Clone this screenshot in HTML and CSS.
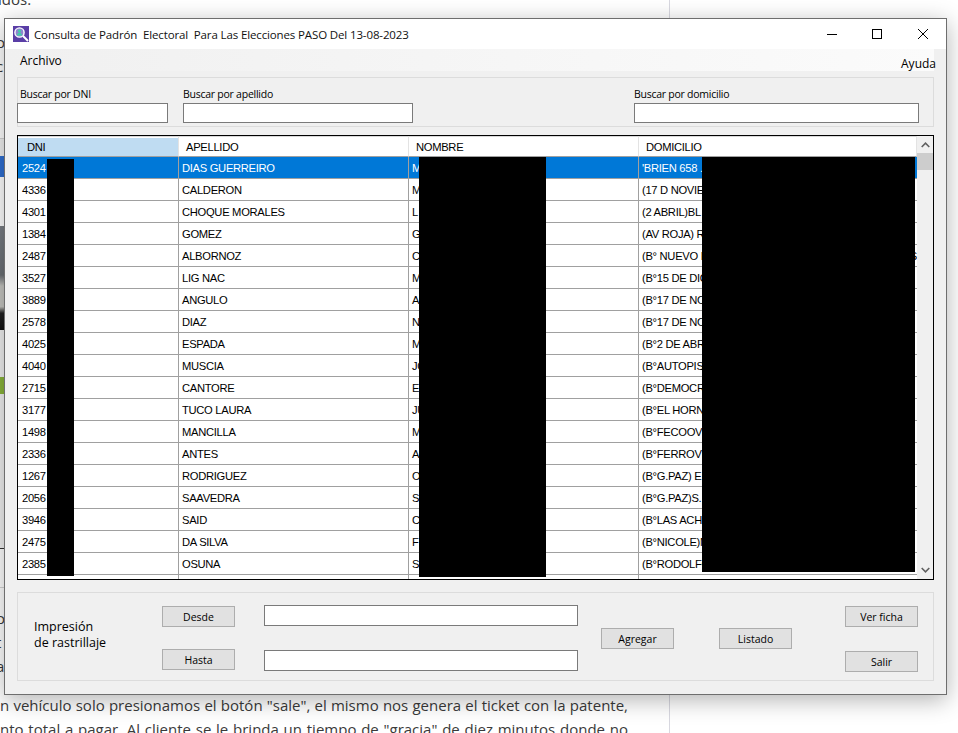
FILE: index.html
```html
<!DOCTYPE html>
<html lang="es">
<head>
<meta charset="UTF-8">
<meta name="viewport" content="width=device-width, initial-scale=1.0">
<title>Consulta de Padrón Electoral</title>
<link rel="stylesheet" href="styles.css">
</head>
<body>

<!-- page behind the window -->
<div class="page">
  <div class="article">
    <p class="art-top">idos.</p>
    <div class="strip">
      <div class="seg seg-white seg-a"><span class="peek peek-1">o</span><span class="peek peek-2">c</span></div>
      <div class="seg seg-pale seg-b"></div>
      <div class="seg seg-blue seg-c"></div>
      <div class="seg seg-white seg-d"></div>
      <div class="seg seg-photo seg-e"></div>
      <div class="seg seg-pale seg-f"></div>
      <div class="seg seg-green seg-g"></div>
      <div class="seg seg-pale seg-h"></div>
      <div class="seg seg-white seg-i"></div>
      <div class="seg seg-white seg-j"><span class="peek peek-3">o</span><span class="peek peek-4">t</span><span class="peek peek-5">a</span></div>
    </div>
    <div class="art-bottom">
      <p class="art-line">n vehículo solo presionamos el botón "sale", el mismo nos genera el ticket con la patente,</p>
      <p class="art-line">nto total a pagar. Al cliente se le brinda un tiempo de "gracia" de diez minutos donde no</p>
    </div>
  </div>
</div>

<div class="window">
  <div class="titlebar">
    <svg class="app-icon" width="16" height="16" viewBox="0 0 16 16">
      <rect width="16" height="16" fill="#5a3ea6"/>
      <circle cx="6.5" cy="6.5" r="4.6" fill="#8f86cf" stroke="#fff" stroke-width="1.4"/>
      <circle cx="6.5" cy="5" r="1.5" fill="#3fd0a8"/>
      <path d="M3.8 9.6c.4-2 1.6-2.6 2.7-2.6s2.3.6 2.7 2.6z" fill="#3fd0a8"/>
      <path d="M10 10l5 5" stroke="#fff" stroke-width="2"/>
    </svg>
    <span class="title-text">Consulta de Padrón  Electoral  Para Las Elecciones PASO Del 13-08-2023</span>
    <div class="win-controls">
      <svg width="10" height="10" viewBox="0 0 10 10"><path d="M0 5.5h10" stroke="#000" fill="none"/></svg>
      <svg width="10" height="10" viewBox="0 0 10 10"><rect x=".5" y=".5" width="9" height="9" stroke="#000" fill="none"/></svg>
      <svg class="win-close" width="10" height="10" viewBox="0 0 10 10"><path d="M0 0l10 10M10 0L0 10" stroke="#000" fill="none"/></svg>
    </div>
  </div>

  <div class="menubar">
    <span class="menu-item">Archivo</span>
    <span class="menu-item menu-help">Ayuda</span>
  </div>

  <div class="content">
    <div class="panel search-panel">
      <div class="field field-dni">
        <label class="field-label">Buscar por DNI</label>
        <input class="text-input" type="text">
      </div>
      <div class="field field-apellido">
        <label class="field-label">Buscar por apellido</label>
        <input class="text-input" type="text">
      </div>
      <div class="field field-domicilio">
        <label class="field-label">Buscar por domicilio</label>
        <input class="text-input" type="text">
      </div>
    </div>

    <div class="grid-box">
      <div class="grid-scroll">
        <table class="grid">
          <colgroup><col class="col-dni"><col class="col-wide"><col class="col-wide"><col class="col-dom"></colgroup>
          <thead>
            <tr><th class="th-active">DNI</th><th>APELLIDO</th><th>NOMBRE</th><th>DOMICILIO</th></tr>
          </thead>
          <tbody>
            <tr class="selected"><td>2524</td><td>DIAS GUERREIRO</td><td>M</td><td>'BRIEN 658 .</td></tr>
            <tr><td>4336</td><td>CALDERON</td><td>M</td><td>(17 D NOVIE</td></tr>
            <tr><td>4301</td><td>CHOQUE MORALES</td><td>L</td><td>(2 ABRIL)BL</td></tr>
            <tr><td>1384</td><td>GOMEZ</td><td>G</td><td>(AV ROJA) R</td></tr>
            <tr><td>2487</td><td>ALBORNOZ</td><td>C</td><td>(B° NUEVO P<span class="cell-tail">S</span></td></tr>
            <tr><td>3527</td><td>LIG NAC</td><td>M</td><td>(B°15 DE DIC</td></tr>
            <tr><td>3889</td><td>ANGULO</td><td>A</td><td>(B°17 DE NO</td></tr>
            <tr><td>2578</td><td>DIAZ</td><td>N</td><td>(B°17 DE NO</td></tr>
            <tr><td>4025</td><td>ESPADA</td><td>M</td><td>(B°2 DE ABR</td></tr>
            <tr><td>4040</td><td>MUSCIA</td><td>JC</td><td>(B°AUTOPIS</td></tr>
            <tr><td>2715</td><td>CANTORE</td><td>E</td><td>(B°DEMOCR</td></tr>
            <tr><td>3177</td><td>TUCO LAURA</td><td>JU</td><td>(B°EL HORN</td></tr>
            <tr><td>1498</td><td>MANCILLA</td><td>M</td><td>(B°FECOOVI</td></tr>
            <tr><td>2336</td><td>ANTES</td><td>A</td><td>(B°FERROVI</td></tr>
            <tr><td>1267</td><td>RODRIGUEZ</td><td>O</td><td>(B°G.PAZ) E</td></tr>
            <tr><td>2056</td><td>SAAVEDRA</td><td>S</td><td>(B°G.PAZ)S.</td></tr>
            <tr><td>3946</td><td>SAID</td><td>C</td><td>(B°LAS ACH</td></tr>
            <tr><td>2475</td><td>DA SILVA</td><td>F</td><td>(B°NICOLE)M</td></tr>
            <tr><td>2385</td><td>OSUNA</td><td>S</td><td>(B°RODOLFO</td></tr>
            <tr><td></td><td></td><td></td><td></td></tr>
          </tbody>
        </table>
      </div>
      <div class="scrollbar">
        <svg class="scroll-arrow" width="9" height="6" viewBox="0 0 9 6"><path d="M.7 5L4.5 1.2 8.3 5" stroke="#606060" stroke-width="1.6" fill="none"/></svg>
        <div class="scroll-thumb"></div>
        <svg class="scroll-arrow scroll-down" width="9" height="6" viewBox="0 0 9 6"><path d="M.7 1L4.5 4.8 8.3 1" stroke="#606060" stroke-width="1.6" fill="none"/></svg>
      </div>
      <!-- redaction bars from the original screenshot -->
      <div class="redact redact-dni"></div>
      <div class="redact redact-nombre"></div>
      <div class="redact redact-dom"></div>
    </div>

    <div class="panel print-panel">
      <div class="print-label">Impresión<br>de rastrillaje</div>
      <div class="btn-col">
        <button class="btn">Desde</button>
        <button class="btn">Hasta</button>
      </div>
      <div class="input-col">
        <input class="text-input" type="text">
        <input class="text-input" type="text">
      </div>
      <button class="btn btn-agregar">Agregar</button>
      <button class="btn btn-listado">Listado</button>
      <div class="side-col">
        <button class="btn">Ver ficha</button>
        <button class="btn">Salir</button>
      </div>
    </div>
  </div>
</div>

</body>
</html>
```

FILE: styles.css
```css
* {
  box-sizing: border-box;
}
html, body {
  margin: 0;
  height: 733px;
  overflow: hidden;
  background-color: #fff;
}

/* page behind the window */
.page {
  height: 733px;
  font-family: "Open Sans", sans-serif;
  font-size: 15px;
  color: #3a3a3a;
}
.article {
  width: 670px;
  height: 733px;
  border-right: 1px solid #d8d8e0;
  overflow: hidden;
}
.art-top {
  margin: -13px 0 0 -2px;
  height: 31px;
  line-height: 24px;
}
.art-bottom {
  width: 628px;
  margin-top: 6px;
  line-height: 24px;
}
.art-line {
  margin: 0;
  text-align: justify;
  text-align-last: justify;
}
.strip {
  width: 4px;
  overflow: hidden;
  line-height: 24px;
}
.seg-white { background-color: #fff; }
.seg-pale { background-color: #f1f1f1; }
.seg-blue { background-color: #2f6fd2; }
.seg-green { background-color: #8ab53a; }
.seg-photo { background: linear-gradient(#7a7f85, #6a6f74 45%, #c5c5c0 55%, #c5c5c0 74%, #222 80%, #111 95%, #f1f1f1 95%); }
.seg-a { height: 120px; padding-top: 12px; }
.seg-b { height: 18px; border-top: 1px solid #d5d5d5; }
.seg-c { height: 21px; }
.seg-d { height: 49px; }
.seg-e { height: 109px; }
.seg-f { height: 42px; }
.seg-g { height: 17px; }
.seg-h { height: 155px; border-bottom: 1px solid #333; }
.seg-i { height: 39px; border-bottom: 1px solid #d5d5d5; }
.seg-j { height: 99px; padding-top: 18px; }
.peek {
  display: block;
  margin-left: -4px;
}

/* window */
.window {
  position: absolute;
  left: 4px;
  top: 18px;
  width: 943px;
  height: 677px;
  display: flex;
  flex-direction: column;
  background-color: #f0f0f0;
  border: 1px solid #6e6e6e;
  box-shadow: 0 5px 22px rgba(0, 0, 0, 0.3);
  font-family: "Open Sans", sans-serif;
  color: #000;
}
.titlebar {
  display: flex;
  align-items: center;
  height: 30px;
  padding-left: 8px;
  background-color: #fff;
}
.app-icon {
  flex: none;
  margin-right: 5px;
}
.title-text {
  font-size: 11.5px;
  letter-spacing: -0.13px;
  white-space: pre;
  color: #111;
}
.win-controls {
  display: flex;
  gap: 35px;
  margin-left: auto;
  margin-right: 18px;
}
.win-close {
  margin-left: 1px;
}
.menubar {
  display: flex;
  justify-content: space-between;
  width: 929px;
  height: 22px;
  padding-left: 15px;
  background: linear-gradient(90deg, #f0f0f0, #fbfbfb);
  font-size: 12px;
}
.menu-item {
  line-height: 23px;
}
.menu-help {
  margin-right: -2px;
  line-height: 30px;
}
.content {
  padding: 6px 12px 0;
}
.panel {
  display: flex;
  width: 917px;
  border: 1px solid #dcdcdc;
}
.search-panel {
  height: 50px;
}
.field {
  display: flex;
  flex-direction: column;
  margin-left: -1px;
  padding-top: 8px;
}
.field-label {
  height: 17px;
  padding-left: 3px;
  font-size: 10.5px;
  letter-spacing: -0.25px;
  line-height: 16px;
  white-space: nowrap;
}
.field-dni { width: 151px; }
.field-apellido { width: 230px; margin-left: 15px; }
.field-apellido .field-label,
.field-domicilio .field-label { padding-left: 0; }
.field-domicilio { width: 285px; margin-left: 221px; }
.text-input {
  display: block;
  width: 100%;
  height: 20px;
  padding: 0;
  border: 1px solid #7a7a7a;
  background-color: #fff;
}

/* table */
.grid-box {
  position: relative;
  display: flex;
  width: 917px;
  height: 445px;
  margin-top: 8px;
  border: 1px solid #000;
}
.grid-scroll {
  width: 899px;
  height: 443px;
  overflow: hidden;
  background-color: #fff;
}
.grid {
  table-layout: fixed;
  width: 899px;
  border-collapse: separate;
  border-spacing: 0;
  font-family: "Liberation Sans", Arial, sans-serif;
  font-size: 11.2px;
  letter-spacing: -0.3px;
}
.col-dni { width: 161px; }
.col-wide { width: 230px; }
.col-dom { width: 278px; }
.grid th {
  height: 21px;
  padding: 0 0 0 7px;
  border-top: 1px solid #d8d8d8;
  border-right: 1px solid #e3e3e3;
  border-bottom: 1px solid #a0a0a0;
  font-weight: normal;
  text-align: left;
}
.grid th.th-active {
  padding-left: 9px;
  background: linear-gradient(#fff 1px, #bfdcf2 1px);
}
.grid td {
  height: 22px;
  padding: 0 0 0 3px;
  border-right: 1px solid #a0a0a0;
  border-bottom: 1px solid #a0a0a0;
  white-space: nowrap;
  overflow: hidden;
}
.grid td:first-child {
  padding-left: 4px;
}
.grid td:last-child {
  border-right: none;
}
.selected td {
  background-color: #0078d7;
  color: #fff;
}
.cell-tail {
  float: right;
}
.scrollbar {
  display: flex;
  flex-direction: column;
  align-items: center;
  width: 16px;
  height: 443px;
  padding-top: 6px;
  background-color: #f0f0f0;
}
.scroll-arrow {
  flex: none;
}
.scroll-thumb {
  width: 16px;
  height: 17px;
  margin-top: 5px;
  background-color: #cdcdcd;
}
.scroll-down {
  margin-top: auto;
  margin-bottom: 6px;
}
.redact {
  position: absolute;
  background-color: #000;
}
.redact-dni { left: 29px; top: 23px; width: 27px; height: 417px; }
.redact-nombre { left: 401px; top: 21px; width: 127px; height: 420px; }
.redact-dom { left: 684px; top: 21px; width: 213px; height: 415px; }

/* bottom panel */
.print-panel {
  height: 89px;
  margin-top: 12px;
  padding: 12px 0 0 16px;
  align-items: flex-start;
}
.print-label {
  width: 128px;
  margin-top: 14px;
  font-size: 12.5px;
  line-height: 16px;
}
.btn {
  display: block;
  flex: none;
  width: 73px;
  height: 21px;
  padding: 0;
  border: 1px solid #adadad;
  background-color: #e1e1e1;
  font-family: "Open Sans", sans-serif;
  font-size: 10.5px;
  color: #000;
}
.btn-col {
  display: flex;
  flex-direction: column;
  gap: 22px;
  margin-top: 1px;
}
.input-col {
  display: flex;
  flex-direction: column;
  gap: 24px;
  width: 314px;
  margin-left: 29px;
}
.input-col .text-input {
  height: 21px;
}
.btn-agregar {
  margin: 23px 0 0 23px;
}
.btn-listado {
  margin: 23px 0 0 45px;
}
.side-col {
  display: flex;
  flex-direction: column;
  gap: 24px;
  margin: 1px 0 0 53px;
}
```
